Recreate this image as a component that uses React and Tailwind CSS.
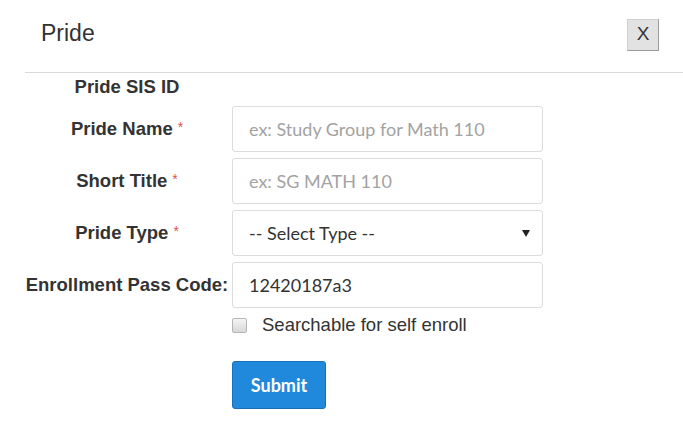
import React from 'react'

const labelFont = { fontFamily: '"Liberation Sans", Arial, sans-serif' }

function Label({ text, required }) {
  return (
    <div className="w-[204px] text-center text-[18.5px] font-bold text-[#333]">
      {text}
      {required && <span className="ml-[5px] relative -top-[3px] text-[14px] font-normal text-[#d9534f]">*</span>}
    </div>
  )
}

function Row({ label, required, children }) {
  return (
    <div className="flex items-center gap-[3px] h-[46px]">
      <Label text={label} required={required} />
      {children}
    </div>
  )
}

const inputCls =
  "w-[311px] h-[46px] rounded-[3px] border border-[#dcdcdc] bg-white px-[16px] text-[18px] text-[#333] placeholder:text-[#a3a3a3] outline-none font-['Lato',sans-serif]"

export default function App() {
  return (
    <div className="w-[683px] h-[424px] bg-white" style={labelFont}>
      {/* Header */}
      <div className="ml-[25px] h-[73px] flex items-center justify-between pl-[16px] pr-[24px] pb-[3px] border-b border-[#d9d9d9]">
        <h1 className="text-[23px] text-[#333] mb-[3px]">Pride</h1>
        <button className="w-[32px] h-[32px] bg-[#e2e2e2] border border-[#d0d0d0] border-r-[#9a9a9a] border-b-[#9a9a9a] text-[19px] text-[#333] flex items-center justify-center">
          X
        </button>
      </div>

      {/* Form */}
      <div className="ml-[25px]">
        <div className="flex items-center h-[28px] mb-[5px]">
          <Label text="Pride SIS ID" />
        </div>
        <div className="flex flex-col gap-[6px]">
          <Row label="Pride Name" required>
            <input className={inputCls} placeholder="ex: Study Group for Math 110" />
          </Row>
          <Row label="Short Title" required>
            <input className={inputCls} placeholder="ex: SG MATH 110" />
          </Row>
          <Row label="Pride Type" required>
            <div className="w-[311px] h-[46px] rounded-[3px] border border-[#dcdcdc] bg-white pl-[16px] pr-[12px] flex items-center justify-between text-[18px] text-[#333] font-['Lato',sans-serif]">
              <span>-- Select Type --</span>
              <svg width="8" height="7" viewBox="0 0 8 7">
                <path d="M0 0h8L4 7z" fill="#222" />
              </svg>
            </div>
          </Row>
          <Row label="Enrollment Pass Code:">
            <input className={inputCls} defaultValue="12420187a3" />
          </Row>
        </div>

        <div className="ml-[207px] mt-[7px] flex items-center h-[20px]">
          <div className="w-[15px] h-[15px] rounded-[2px] border border-[#b5b5b5] bg-gradient-to-b from-[#f4f4f4] to-[#d8d8d8]" />
          <span className="ml-[15px] text-[18.5px] text-[#333]">Searchable for self enroll</span>
        </div>

        <button className="ml-[207px] mt-[26px] w-[94px] h-[48px] rounded-[3px] bg-[#2089dc] border border-[#1a70b8] text-white text-[18px] font-bold font-['Lato',sans-serif]">
          Submit
        </button>
      </div>
    </div>
  )
}
